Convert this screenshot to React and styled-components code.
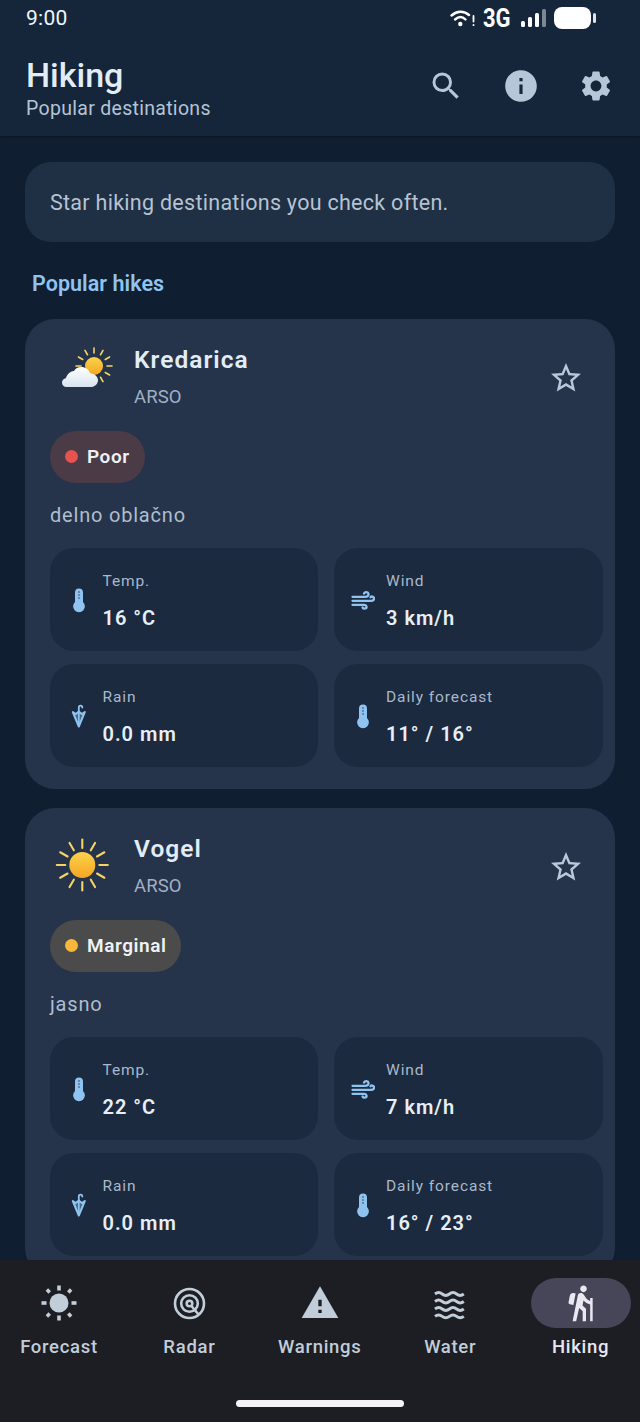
import React from "react";
import styled, { createGlobalStyle } from "styled-components";
import { MdSearch, MdInfo, MdSettings, MdStarBorder, MdWarning, MdHiking } from "react-icons/md";

const Global = createGlobalStyle`
  html, body { margin: 0; padding: 0; background: #0f1e30; }
  * { box-sizing: border-box; }
  body { font-family: Roboto, "Noto Sans", sans-serif; }
`;

const Screen = styled.div`
  width: 640px; height: 1422px; display: flex; flex-direction: column;
  overflow: hidden; background: #0f1e30;
`;
const Header = styled.header`
  flex: none; height: 136px; background: #16263a; padding: 0 26px;
  display: flex; flex-direction: column; box-shadow: 0 1px 2px rgba(0,0,0,.3);
`;
const StatusBar = styled.div`
  height: 36px; display: flex; align-items: center; justify-content: space-between; padding-right: 18px;
`;
const Time = styled.span`
  color: #f1f5f9; font-size: 21px; letter-spacing: .3px;
`;
const StatusIcons = styled.div`
  display: flex; align-items: center; gap: 7px;
`;
const NetText = styled.span`
  color: #fff; font-size: 25px; font-weight: 700; display: inline-block; width: 31px;
  transform: scaleX(.88); transform-origin: left center; line-height: 1;
`;
const TitleRow = styled.div`
  flex: 1; display: flex; align-items: center; justify-content: space-between; padding-top: 3px;
`;
const TitleBlock = styled.div`
  display: flex; flex-direction: column;
`;
const Title = styled.h1`
  margin: 0; color: #e3edf7; font-size: 34px; font-weight: 500; line-height: 40px;
`;
const Subtitle = styled.div`
  color: #b3c4d6; font-size: 19.5px; line-height: 24px; letter-spacing: .3px; margin-top: 2px;
`;
const Actions = styled.div`
  display: flex; align-items: center; gap: 38px; margin: -3px 0 0 0;
  color: #b5c6d8;
`;
const Main = styled.main`
  flex: 1; min-height: 0; overflow: hidden; padding: 26px 25px 0;
  display: flex; flex-direction: column;
`;
const Banner = styled.div`
  flex: none; height: 80px; border-radius: 26px; background: #1f2f44; color: #b5c3d3;
  font-size: 21.5px; letter-spacing: .28px; display: flex; align-items: center; padding-left: 25px;
`;
const SectionLabel = styled.h2`
  margin: 26px 0 20px 7px; color: #90c4f0; font-size: 21.5px; font-weight: 600; line-height: 31px;
  letter-spacing: .05px; flex: none;
`;
const Cards = styled.div`
  display: flex; flex-direction: column; gap: 19px; flex: none;
`;
const Card = styled.article`
  background: #25344a; border-radius: 30px; padding: 20px 12px 22px 25px; flex: none;
`;
const CardHead = styled.div`
  height: 76px; display: flex; align-items: flex-start;
`;
const WeatherSlot = styled.div`
  width: 84px; height: 64px; flex: none; margin-top: 2px;
`;
const Names = styled.div`
  flex: 1; padding-top: 3px;
`;
const Name = styled.div`
  color: #e3edf7; font-size: 24.5px; font-weight: 600; line-height: 36px; letter-spacing: 1.05px;
`;
const Source = styled.div`
  color: #a0b0c5; font-size: 18.5px; line-height: 28px; margin-top: 5px; letter-spacing: .1px;
`;
const StarSlot = styled.div`
  color: #b9c9da; margin: 21px 19.5px 0 0; height: 36px;
`;
const Chip = styled.div`
  display: flex; width: fit-content; align-items: center; gap: 10px; height: 52px; border-radius: 26px;
  padding: 0 15px 1px; margin-top: 16px; background: ${p => p.$bg};
  color: #eef2f6; font-size: 19px; font-weight: 600; letter-spacing: .55px;
`;
const Dot = styled.span`
  width: 13px; height: 13px; border-radius: 50%; background: ${p => p.$c}; margin-right: -1px;
`;
const Desc = styled.div`
  color: #b0bdcd; font-size: 20px; letter-spacing: .8px; line-height: 30px; margin-top: 16px; padding-top: 1px;
  height: 30px;
`;
const Metrics = styled.div`
  display: grid; grid-template-columns: 268px 269.5px; gap: 13px 15.5px; margin-top: 19px;
`;
const Metric = styled.div`
  height: 103px; background: #1b2a3f; border-radius: 24px; display: flex; align-items: center;
  padding: 3px 0 0 17px;
`;
const MetricIcon = styled.div`
  width: 24px; height: 28px; margin: -3px 11.5px 0 0; flex: none; color: #90c4f0;
`;
const MetricLabel = styled.div`
  color: #a9b8ca; font-size: 15.5px; letter-spacing: .9px; line-height: 20px;
`;
const MetricValue = styled.div`
  color: #e8eef5; font-size: 20px; font-weight: 600; letter-spacing: 1px; line-height: 26px; margin-top: 14px;
`;
const Nav = styled.nav`
  flex: none; height: 162px; background: #1d1e24; padding: 18px 8px 0; position: relative;
  display: grid; grid-template-columns: repeat(5, 102px); column-gap: 28.4px; align-items: start;
`;
const NavItem = styled.div`
  display: flex; flex-direction: column; align-items: center;
  color: ${p => p.$active ? "#e9e7f0" : "#c1cdd9"};
`;
const NavPill = styled.div`
  width: 100px; height: 50px; border-radius: 25px; display: flex; align-items: center; justify-content: center;
  background: ${p => p.$active ? "#474558" : "transparent"};
`;
const NavLabel = styled.div`
  font-size: 18.5px; font-weight: 500; letter-spacing: .7px; line-height: 24px; margin-top: 7px;
`;
const HomeBar = styled.div`
  position: absolute; left: 236px; bottom: 15px; width: 168px; height: 7px; border-radius: 4px; background: #f4f4f6;
`;

const Wifi = () => (
  <svg width="26" height="20" viewBox="0 0 26 20" fill="none" stroke="#fff" strokeLinecap="round">
    <path d="M1.5 7.5C7 2.5 14 2.5 19 7" strokeWidth="2.4" />
    <path d="M5 11.5c3.5-3 7.5-3 10.5 0" strokeWidth="2.4" />
    <circle cx="10.3" cy="16" r="2.2" fill="#fff" stroke="none" />
    <path d="M23.5 8v5.5M23.5 16.8v.4" strokeWidth="1.8" />
  </svg>
);
const Signal = () => (
  <svg width="26" height="20" viewBox="0 0 26 20">
    <rect x="0" y="13" width="4" height="6" rx="1.5" fill="#fff" />
    <rect x="7" y="9" width="4" height="10" rx="1.5" fill="#fff" />
    <rect x="14" y="5" width="4" height="14" rx="1.5" fill="#fff" />
    <rect x="21" y="1" width="4" height="18" rx="1.5" fill="#7c8796" />
  </svg>
);
const Battery = () => (
  <svg width="42" height="22" viewBox="0 0 42 22">
    <rect x="0" y="0" width="37" height="22" rx="8" fill="#fff" />
    <rect x="39" y="6" width="3" height="10" rx="1.5" fill="#dfe3e8" />
  </svg>
);

const SunRays = ({ cx, cy, r1, r2, n = 12, w = 2.4 }) => (
  <g stroke="#f5d467" strokeWidth={w} strokeLinecap="round">
    {Array.from({ length: n }).map((_, i) => {
      const a = (i * 2 * Math.PI) / n;
      return <line key={i} x1={cx + r1 * Math.cos(a)} y1={cy + r1 * Math.sin(a)} x2={cx + r2 * Math.cos(a)} y2={cy + r2 * Math.sin(a)} />;
    })}
  </g>
);
const PartlyCloudy = () => (
  <svg width="64" height="64" viewBox="0 0 64 64">
    <defs>
      <linearGradient id="sunA" x1="0" y1="0" x2="0" y2="1"><stop offset="0" stopColor="#fcd34a" /><stop offset="1" stopColor="#f5a623" /></linearGradient>
      <linearGradient id="cloudA" x1="0" y1="0" x2="0" y2="1"><stop offset="0" stopColor="#ffffff" /><stop offset="1" stopColor="#d8e4ef" /></linearGradient>
    </defs>
    <SunRays cx={44} cy={25} r1={13} r2={18} w={1.6} />
    <circle cx="44" cy="25" r="9" fill="url(#sunA)" />
    <path d="M17 46h-0.5c-2.5 0-4.5-1.8-4.5-4.3 0-2.3 1.600-4 3.800-4.400C17 33.500 19.700 30.500 24 30c1.500-2.500 4-4 7-4 4.500 0 8 2.500 9 6.200 4.500 .3 8 3.300 8 7 0 3.700-3 6.800-7.500 6.800z" fill="url(#cloudA)" />
  </svg>
);
const Sunny = () => (
  <svg width="64" height="64" viewBox="0 0 64 64">
    <defs>
      <linearGradient id="sunB" x1="0" y1="0" x2="0" y2="1"><stop offset="0" stopColor="#fcd34a" /><stop offset="1" stopColor="#f5a623" /></linearGradient>
    </defs>
    <SunRays cx={32.3} cy={35} r1={17} r2={25.5} w={2.1} />
    <circle cx="32.3" cy="35" r="13" fill="url(#sunB)" />
  </svg>
);
const Thermo = () => (
  <svg width="24" height="28" viewBox="0 0 24 28">
    <path fill="currentColor" d="M8 6.500a4 4 0 0 1 8 0v9.500a5.900 5.900 0 1 1-8 0z" />
    <path d="M12 5.500v1M12 8.500v1M12 11.500v1" stroke="#1b2a3f" strokeWidth="1.500" />
  </svg>
);
const Wind = () => (
  <svg width="24" height="28" viewBox="0 0 24 28" fill="none" stroke="currentColor" strokeWidth="2.300" strokeLinecap="round">
    <path d="M1.500 10.800H14c2.800 0 3.800-1.500 3.500-3-.4-2-3.500-2.300-4.500-.3" />
    <path d="M1.500 14.800h18.500c2.500 0 3.300-1.400 3-2.800-.4-1.600-2.500-2-3.500-.8" />
    <path d="M1.500 18.800h12c2.300 0 2.800 3 .8 3.700-1.200.4-2.300-.1-2.700-1" />
  </svg>
);
const Umbrella = () => (
  <svg width="24" height="28" viewBox="0 0 24 28">
    <path fill="none" stroke="currentColor" strokeWidth="1.800" strokeLinecap="round" d="M11.800 9V5.500c0-2.400 3.500-2.400 3.500 0" />
    <path fill="currentColor" fillOpacity=".4" stroke="currentColor" strokeWidth="2" strokeLinejoin="round" d="M5.800 10l6 14.500 6-14.500-3 2-3-2.400-3 2.400z" />
    <path stroke="currentColor" strokeWidth="1.700" d="M11.800 10v14" />
  </svg>
);
const Waves = () => (
  <svg width="36" height="36" viewBox="0 0 36 36" fill="none" stroke="currentColor" strokeWidth="2.900">
    {[8, 15.5, 23, 30.3].map(y => (
      <path key={y} d={`M3 ${y + 1}q3.600-2.800 7.200 0t7.200 0t7.200 0t7.200 0`} />
    ))}
  </svg>
);
const NavSun = () => (
  <svg width="36" height="36" viewBox="0 0 36 36" fill="currentColor">
    <circle cx="18" cy="18" r="9.500" />
    <rect x="16.200" y="0.500" width="3.600" height="5" /><rect x="16.200" y="30.500" width="3.600" height="5" />
    <rect x="0.500" y="16.200" width="5" height="3.600" /><rect x="30.500" y="16.200" width="5" height="3.600" />
    <rect x="5.500" y="4" width="3.600" height="4" transform="rotate(-45 7.300 6)" /><rect x="26.900" y="4" width="3.600" height="4" transform="rotate(45 28.700 6)" />
    <rect x="5.500" y="28" width="3.600" height="4" transform="rotate(45 7.300 30)" /><rect x="26.900" y="28" width="3.600" height="4" transform="rotate(-45 28.700 30)" />
  </svg>
);
const NavRadar = () => (
  <svg width="36" height="38" viewBox="0 0 36 38" fill="none" stroke="currentColor" strokeWidth="2.600">
    <circle cx="18.500" cy="19.500" r="14.500" />
    <circle cx="18.500" cy="19.500" r="8.300" />
    <circle cx="18.500" cy="19.500" r="2.800" />
    <path d="M20 21.500l8 9.500" />
  </svg>
);

const spots = [
  { name: "Kredarica", icon: <PartlyCloudy />, status: "Poor", dot: "#e8534f", chip: "#4b3b47", desc: "delno oblačno", temp: "16 °C", wind: "3 km/h", range: "11° / 16°" },
  { name: "Vogel", icon: <Sunny />, status: "Marginal", dot: "#f5b73c", chip: "#4b4b4b", desc: "jasno", temp: "22 °C", wind: "7 km/h", range: "16° / 23°" },
];

const tabs = [
  { label: "Forecast", icon: <NavSun /> },
  { label: "Radar", icon: <NavRadar /> },
  { label: "Warnings", icon: <MdWarning size={40} /> },
  { label: "Water", icon: <Waves /> },
  { label: "Hiking", icon: <MdHiking size={40} />, active: true },
];

const MetricTile = ({ icon, label, value }) => (
  <Metric>
    <MetricIcon>{icon}</MetricIcon>
    <div>
      <MetricLabel>{label}</MetricLabel>
      <MetricValue>{value}</MetricValue>
    </div>
  </Metric>
);

export default function App() {
  return (
    <Screen>
      <Global />
      <Header>
        <StatusBar>
          <Time>9:00</Time>
          <StatusIcons>
            <Wifi />
            <NetText>3G</NetText>
            <Signal />
            <Battery />
          </StatusIcons>
        </StatusBar>
        <TitleRow>
          <TitleBlock>
            <Title>Hiking</Title>
            <Subtitle>Popular destinations</Subtitle>
          </TitleBlock>
          <Actions>
            <MdSearch size={36} />
            <MdInfo size={38} />
            <MdSettings size={36} />
          </Actions>
        </TitleRow>
      </Header>
      <Main>
        <Banner>Star hiking destinations you check often.</Banner>
        <SectionLabel>Popular hikes</SectionLabel>
        <Cards>
          {spots.map(s => (
            <Card key={s.name}>
              <CardHead>
                <WeatherSlot>{s.icon}</WeatherSlot>
                <Names>
                  <Name>{s.name}</Name>
                  <Source>ARSO</Source>
                </Names>
                <StarSlot><MdStarBorder size={36} /></StarSlot>
              </CardHead>
              <Chip $bg={s.chip}><Dot $c={s.dot} />{s.status}</Chip>
              <Desc>{s.desc}</Desc>
              <Metrics>
                <MetricTile icon={<Thermo />} label="Temp." value={s.temp} />
                <MetricTile icon={<Wind />} label="Wind" value={s.wind} />
                <MetricTile icon={<Umbrella />} label="Rain" value="0.0 mm" />
                <MetricTile icon={<Thermo />} label="Daily forecast" value={s.range} />
              </Metrics>
            </Card>
          ))}
        </Cards>
      </Main>
      <Nav>
        {tabs.map(t => (
          <NavItem key={t.label} $active={t.active}>
            <NavPill $active={t.active}>{t.icon}</NavPill>
            <NavLabel>{t.label}</NavLabel>
          </NavItem>
        ))}
        <HomeBar />
      </Nav>
    </Screen>
  );
}
